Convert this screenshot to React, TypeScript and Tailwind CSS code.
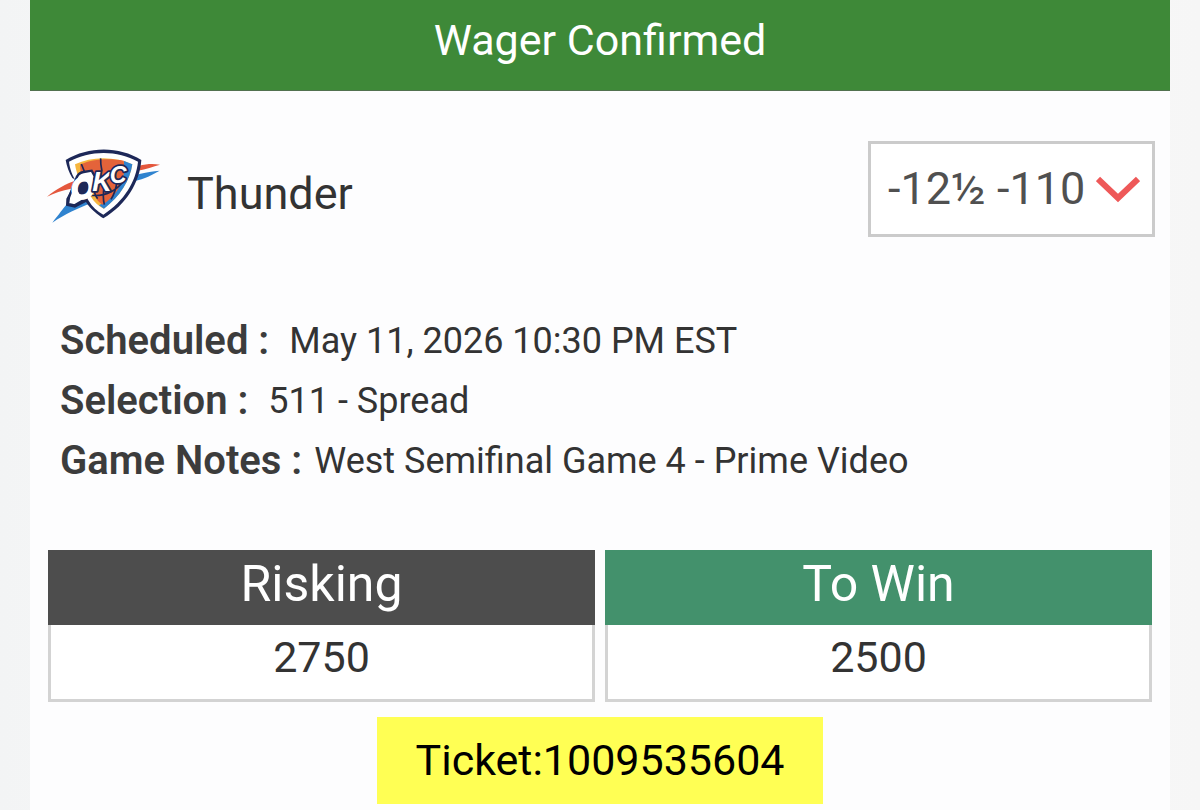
const details = [
  { label: 'Scheduled :', value: 'May 11, 2026 10:30 PM EST', gap: 'gap-5' },
  { label: 'Selection :', value: '511 - Spread', gap: 'gap-5' },
  { label: 'Game Notes :', value: 'West Semifinal Game 4 - Prime Video', gap: 'gap-3' },
];

const amounts = [
  { label: 'Risking', value: '2750', color: 'bg-[#4d4d4d]' },
  { label: 'To Win', value: '2500', color: 'bg-[#43916c]' },
];

function TeamLogo() {
  return (
    <svg viewBox="20 35 345 231" className="h-[77px] w-[115px] shrink-0" role="img" aria-label="Oklahoma City Thunder">
      <path d="M20 184 C50 160 75 147 108 135 L92 160 C65 165 42 173 20 184Z" fill="#e4573d" />
      <path d="M296 91 C318 86 338 85 359 88 C338 94 318 101 292 106Z" fill="#e4573d" />
      <path d="M294 117 C318 111 338 108 358 106 C335 119 315 130 280 138Z" fill="#2f83cf" />
      <path d="M36 262 C58 234 68 220 80 206 L98 214 L148 190 L156 202 C112 218 74 236 36 262Z" fill="#2f83cf" />
      <path
        d="M76 74 C145 32 236 32 303 74 C298 142 258 208 189 249 C172 238 151 222 137 200 L104 217 L77 211 L78 190 L108 135 L96 128 C86 112 79 92 76 74Z"
        fill="#1d2858"
      />
      <path d="M86 79 C148 44 232 44 293 79 C287 138 252 197 189 238 C171 228 155 214 145 196 L110 140 C96 124 88 98 86 79Z" fill="#fff" />
      <path d="M104 87 C154 63 224 63 276 87 C269 134 240 184 190 220 C175 212 161 200 152 184 L118 132 C111 118 106 102 104 87Z" fill="#f6b63e" />
      <path d="M250 76 L276 87 C269 134 240 184 191 220 L176 210 C232 180 258 128 250 76Z" fill="#2f83cf" />
      <path d="M119 88 C154 70 212 68 250 76 C258 122 238 176 186 208 C176 202 168 192 162 180 L126 130 C122 114 119 100 119 88Z" fill="#e4633a" />
      <g fill="none" stroke="#1d2858" strokeWidth="5">
        <path d="M123 86 Q128 98 132 108 M181 69 Q180 86 185 108 M165 155 Q158 174 172 190 M192 150 Q186 184 192 208 M230 138 Q226 170 212 192 M150 180 Q215 186 252 134" />
      </g>
      <path
        d="M83 206 L86 186 L106 134 Q112 112 130 110 L154 106 L164 124 L148 178 L134 192 L103 210Z"
        fill="#fff"
        stroke="#1d2858"
        strokeWidth="7"
      />
      <ellipse cx="128" cy="157" rx="17" ry="24" fill="#1d2858" />
      <g
        fontFamily="Liberation Sans, sans-serif"
        fontWeight="700"
        fontStyle="italic"
        fill="#fff"
        stroke="#1d2858"
        strokeWidth="11"
        strokeLinejoin="round"
        style={{ paintOrder: 'stroke' }}
      >
        <text x="91" y="190" fontSize="92" stroke="#fff" strokeWidth="5">O</text>
        <text x="156" y="167" fontSize="82">K</text>
        <text x="208" y="142" fontSize="70">C</text>
      </g>
    </svg>
  );
}

export default function App() {
  return (
    <div className="min-h-screen bg-gradient-to-r from-[#f3f4f5] via-[#fdfdfd] to-[#f6f6f6] px-[30px] font-['Roboto',sans-serif] text-[#333]">
      <main className="flex min-h-screen flex-col bg-[#fdfdfe]">
        <header className="flex h-[91px] items-start justify-center border-b border-[#52714f] bg-[#3e8938] pt-[15px]">
          <h1 className="text-[43px] leading-[50px] text-white">Wager Confirmed</h1>
        </header>

        <section className="flex items-start justify-between pt-[50px] pr-[15px] pl-[17px]">
          <div className="flex items-center gap-[25px] pt-[6px]">
            <TeamLogo />
            <h2 className="pt-4 text-[45px] leading-[54px]">Thunder</h2>
          </div>
          <div className="relative">
            <select
              aria-label="Line"
              className="h-[96px] w-[287px] appearance-none border-3 border-[#cbcbcb] bg-white pl-[17px] text-[45px] text-[#505050]"
            >
              <option>-12½ -110</option>
            </select>
            <svg
              viewBox="0 0 44 28"
              className="pointer-events-none absolute top-[35px] right-[15px] h-7 w-11"
              fill="none"
              stroke="#ee5858"
              strokeWidth="6"
              aria-hidden="true"
            >
              <path d="M2 3 L22 22 L42 3" />
            </svg>
          </div>
        </section>

        <dl className="px-[30px] pt-[74px]">
          {details.map((item) => (
            <div key={item.label} className={`flex h-[60px] items-center ${item.gap}`}>
              <dt className="text-[40px] leading-[60px] font-semibold text-[#3c3c3c]">{item.label}</dt>
              <dd className="text-[36px] leading-[60px]">{item.value}</dd>
            </div>
          ))}
        </dl>

        <section className="grid grid-cols-2 gap-[10px] px-[18px] pt-[59px]">
          {amounts.map((item) => (
            <div key={item.label} className="text-center">
              <h3 className={`h-[75px] pt-1 text-[50px] leading-[60px] text-white ${item.color}`}>{item.label}</h3>
              <p className="h-[77px] border-3 border-t-0 border-[#d3d3d3] bg-white pt-[7px] text-[43px] leading-[50px]">{item.value}</p>
            </div>
          ))}
        </section>

        <p className="mt-[15px] flex h-[87px] w-[446px] items-center justify-center self-center bg-[#ffff54] text-[43px] text-black">
          Ticket:1009535604
        </p>
      </main>
    </div>
  );
}
